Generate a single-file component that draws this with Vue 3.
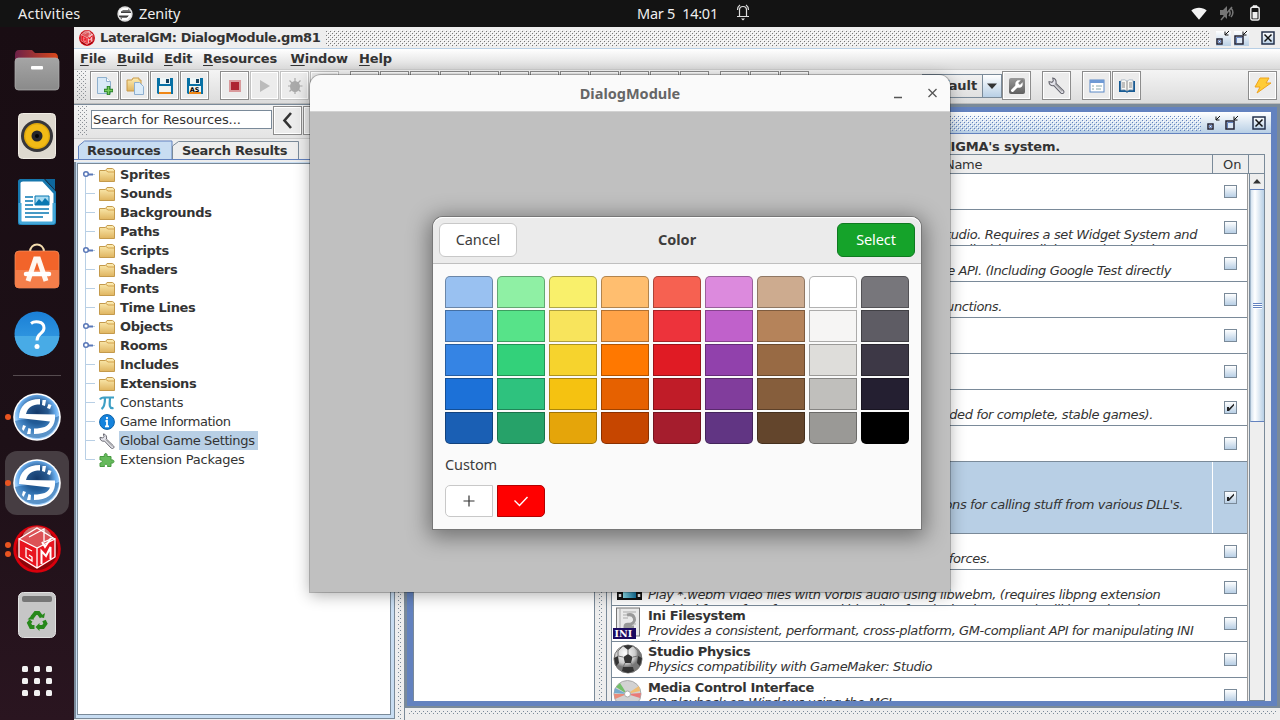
<script setup>
const tree = [
  { t: 'Sprites', k: 'folder', h: 1 }, { t: 'Sounds', k: 'folder' }, { t: 'Backgrounds', k: 'folder' },
  { t: 'Paths', k: 'folder' }, { t: 'Scripts', k: 'folder', h: 1 }, { t: 'Shaders', k: 'folder' },
  { t: 'Fonts', k: 'folder' }, { t: 'Time Lines', k: 'folder' }, { t: 'Objects', k: 'folder', h: 1 },
  { t: 'Rooms', k: 'folder', h: 1 }, { t: 'Includes', k: 'folder' }, { t: 'Extensions', k: 'folder' },
  { t: 'Constants', k: 'pi' }, { t: 'Game Information', k: 'info' },
  { t: 'Global Game Settings', k: 'wrench', sel: 1 }, { t: 'Extension Packages', k: 'puzzle' }
]
const menus = ['File', 'Build', 'Edit', 'Resources', 'Window', 'Help']
const rows = [
  {}, { tail: 'Studio. Requires a set Widget System and', end: 1197, more: 'enabled for all widgets, dialogs and native input    ' },
  { tail: 'the API. (Including Google Test directly', end: 1171 },
  { tail: 'functions.', end: 1002 }, {}, {},
  { tail: 'needed for complete, stable games).', end: 1153, on: 1 }, {},
  { tail: "functions for calling stuff from various DLL's.", end: 1183, on: 1, sel: 1 },
  { tail: 'forces.', end: 990 },
  { name: 'Video', d: 'Play *.webm video files with vorbis audio using libwebm, (requires libpng extension', m: 'enabled for surface format, and blending for playback textures) will be replaced', k: 'film' },
  { name: 'Ini Filesystem', d: 'Provides a consistent, performant, cross-platform, GM-compliant API for manipulating INI', m: 'files.', k: 'ini' },
  { name: 'Studio Physics', d: 'Physics compatibility with GameMaker: Studio', k: 'ball' },
  { name: 'Media Control Interface', d: 'CD playback on Windows using the MCI.', k: 'cd' }
]
const palette = [
  '#99c1f1', '#8ff0a4', '#f9f06b', '#ffbe6f', '#f66151', '#dc8add', '#cdab8f', '#ffffff', '#77767b',
  '#62a0ea', '#57e389', '#f8e45c', '#ffa348', '#ed333b', '#c061cb', '#b5835a', '#f6f5f4', '#5e5c64',
  '#3584e4', '#33d17a', '#f6d32d', '#ff7800', '#e01b24', '#9141ac', '#986a44', '#deddda', '#3d3846',
  '#1c71d8', '#2ec27e', '#f5c211', '#e66100', '#c01c28', '#813d9c', '#865e3c', '#c0bfbc', '#241f31',
  '#1a5fb4', '#26a269', '#e5a50a', '#c64600', '#a51d2d', '#613583', '#63452c', '#9a9996', '#000000'
]
</script>

<template>
  <div class="screen">
    <svg class="defs" width="0" height="0">
      <defs>
        <linearGradient id="gFold" x2="0" y2="1"><stop stop-color="#fdeeb4" /><stop offset="1" stop-color="#dfb45f" /></linearGradient>
        <linearGradient id="gGrey" x2="0" y2="1"><stop stop-color="#a5a5a5" /><stop offset="1" stop-color="#8a8a8a" /></linearGradient>
        <linearGradient id="gBack" x2="1" y2="0"><stop stop-color="#6d2148" /><stop offset="1" stop-color="#d9481b" /></linearGradient>
        <linearGradient id="gHelp" x2="0" y2="1"><stop stop-color="#1a7fd6" /><stop offset="1" stop-color="#3da4e6" /></linearGradient>
        <radialGradient id="gS" cy=".4"><stop stop-color="#143a6b" /><stop offset=".5" stop-color="#28598f" /><stop offset=".85" stop-color="#6eb2f2" /><stop offset="1" stop-color="#a5d2fb" /></radialGradient>
        <linearGradient id="gBlue" x2="0" y2="1"><stop stop-color="#fff" /><stop offset="1" stop-color="#b8cfe5" /></linearGradient>
        <linearGradient id="gFilm" x2="1" y2="0"><stop stop-color="#8ee2ef" /><stop offset="1" stop-color="#1374a0" /></linearGradient>
        <linearGradient id="gTool" x2="0" y2="1"><stop stop-color="#999" /><stop offset="1" stop-color="#606060" /></linearGradient>
        <radialGradient id="gBall" cx=".4" cy=".3"><stop stop-color="#fff" /><stop offset=".7" stop-color="#ccc" /><stop offset="1" stop-color="#777" /></radialGradient>
        <symbol id="wrench" viewBox="0 0 16 16"><path d="M4.400.9 5 3.700 3.700 5 1 4.300C.7 7 3 8.800 5.500 8.100l6.700 7c.8.7 1.700.5 2.300 0 .6-.6.7-1.500 0-2.200l-7-6.800C8.100 3.300 6.600 1 4.400.9z" fill="#e3e3ea" stroke="#66666f" /><path d="m6.500 6.500 6.900 7.100" stroke="#aaa" /></symbol>
        <symbol id="doc" viewBox="0 0 18 18"><path d="M1.500.5h9l4 4v12h-13z" fill="#d9eaf7" stroke="#8fb0cd" /><path d="M10.500.5v4h4" fill="#fff" stroke="#8fb0cd" /></symbol>
        <symbol id="floppy" viewBox="0 0 16 16"><path d="M0 0h16v16H1l-1-1z" fill="#0871a5" /><path d="M3 0h10v6H3z" fill="#eef5f6" /><path d="M9 1h3v4H9z" fill="#123f5c" /><path d="M2 8h12v6H2z" fill="#f4f4ef" /><path d="M2 14h12v2H2z" fill="#ef8615" /></symbol>
        <symbol id="slogo" viewBox="0 0 48 48"><circle cx="24" cy="24" r="23.800" fill="#fff" /><circle cx="24" cy="24" r="22.300" fill="url(#gS)" /><path d="M2 28c10-4 24 3 44-5-1 13-10 22-22 22C13 45 4 38 2 28z" fill="#1e5f9f" opacity=".55" /><path d="M27 6v5.500c-8 0-12 2.500-14 9.500L42 21.500V26c-1 9-8 15-21 15v-5.500c9 0 14-2 16-7L6 25C6 13 14 6 27 6z" fill="#fff" /><path d="m29 12 .5-5h3.500l-1 6zm5 3 1.500-4 3 1-1.500 4zM18 36l-.5 5H14l1.500-6zM13 33l-2.500 5-1.500-2 1-4z" fill="#fff" /></symbol>
        <symbol id="lgm" viewBox="0 0 48 48"><circle cx="24" cy="24" r="23.800" fill="#d9000c" /><circle cx="24" cy="24" r="21" fill="#8b0509" /><ellipse cx="24" cy="14" rx="15" ry="12.500" fill="#d68785" opacity=".8" /><path d="m6 14 18-11 18 11v19L24 44 6 33z" fill="#e81520" /><path d="m6 14 18-11 18 11-18 9z" fill="#dc5257" /><path d="m6 14 18 9 18-9v18L24 43 6 32zM24 23v20M6 14 24 3l18 11M16 12 31 4v13l9-4M19 26l-6-3v9l6 4v-4l-3-2" fill="none" stroke="#fff" stroke-width="1.300" /><path d="M28.500 39V26l4.500 5 4.500-9v12M29 17l3 5 6-9" fill="none" stroke="#fff" stroke-width="2" /></symbol>
      </defs>
    </svg>

    <header class="topbar">
      <span class="act">Activities</span>
      <svg class="zicon" width="16" height="16" viewBox="0 0 16 16"><circle cx="8" cy="8" r="7.700" fill="#ddd" /><circle cx="8" cy="8" r="6" fill="#777" /><path d="M11 3H6L3 5v3h10v2l-3 3H5M2 8.500h12" stroke="#fff" stroke-width="2" fill="none" /><path d="M4 6.300h10M2 10.300h9" stroke="#333" /></svg>
      <span class="zen">Zenity</span>
      <span class="clock">Mar 5&nbsp; 14:01</span>
      <svg class="bell" width="14" height="17" viewBox="0 0 14 17"><path d="M3.500 12V6c0-2 1.300-3.500 3.500-3.500S10.500 4 10.500 6v6M1 12.500h12M1.500 6c0-2 1-4 2.500-5M12.500 6c0-2-1-4-2.500-5" fill="none" stroke="#ddd" stroke-width="1.200" /><path d="M5 14.500h4l-2 2z" fill="#eee" /></svg>
      <svg class="wifi" width="16" height="13" viewBox="0 0 16 13"><path d="M.3 3.500C4.500-.3 11.500-.3 15.700 3.500L8 12.700z" fill="#f2f2f2" /></svg>
      <svg class="mute" width="16" height="16" viewBox="0 0 16 16"><path d="M1 5h3l4-4v13l-4-4H1z" fill="#777" /><path d="M10 5c1.500 2 1.500 4 0 6M12 3c2.500 3 2.500 6 0 9M2 15 13 2" stroke="#777" stroke-width="1.500" fill="none" /></svg>
      <svg class="batt" width="10" height="16" viewBox="0 0 10 16"><path d="M3 2V.8h4V2" fill="#eee" stroke="#eee" /><rect x=".8" y="2.300" width="8.400" height="12.700" rx="1.500" fill="none" stroke="#eee" stroke-width="1.400" /><path d="M2.500 7h5v6.500h-5z" fill="#eee" /></svg>
    </header>

    <nav class="dock">
      <div class="item"><svg width="46" height="42" viewBox="0 0 46 42"><path d="M1 6q0-5 4-5h13l3 3h19q4 0 4 5v15H1z" fill="url(#gBack)" /><rect x="1" y="9" width="44" height="32" rx="3.500" fill="url(#gGrey)" stroke="#b3b3b3" stroke-width=".7" /><rect x="17" y="17" width="12" height="3.500" rx="1" fill="#fff" /></svg></div>
      <div class="item"><svg width="38" height="46" viewBox="0 0 38 46"><rect x=".5" y=".5" width="37" height="45" rx="4" fill="#ded9cf" stroke="#f1ede5" /><circle cx="19" cy="23" r="16" fill="#37373b" /><circle cx="19" cy="23" r="13" fill="#e0a90c" /><circle cx="19" cy="23" r="11.500" fill="#f1ba16" /><circle cx="19" cy="23" r="5.500" fill="#26272c" /><circle cx="19" cy="23" r="2" fill="#050505" /></svg></div>
      <div class="item"><svg width="38" height="46" viewBox="0 0 38 46"><path d="M5 1h20l12 13v28q0 3-4 3H4q-3 0-3-3V4q0-3 4-3z" fill="#fff" stroke="#1677ad" stroke-width="3" /><path d="M2 24v18q0 2 3 2h28q3 0 3-2V24" fill="none" stroke="#44a7d8" stroke-width="3" /><path d="M27 0h10v11z" fill="#0e679c" /><path d="M7 18h8M7 22h8M7 26h8M7 30h24M7 34h24M7 38h18" stroke="#0978b2" stroke-width="1.700" /><path d="M17 17h14v9H17z" fill="#a9dbf1" stroke="#0978b2" /><path d="m17 25 4-5 3 3 3-4 4 4v3H17z" fill="#0978b2" /></svg></div>
      <div class="item"><svg class="bag" width="46" height="46" viewBox="0 0 46 46"><path d="M16 9c0-10 14-10 14 0" fill="none" stroke="#f3dcae" stroke-width="2" /><rect x="1" y="8" width="44" height="37" rx="4" fill="#f2642a" stroke="#f59463" stroke-width=".7" /><path d="M1 27h44v14q0 4-4 4H5q-4 0-4-4z" fill="#f47e4a" /><path d="M14 38 21.500 16h3L32 38" fill="none" stroke="#fff7f0" stroke-width="5" /><path d="M12 31h23" stroke="#fff" stroke-width="4.500" stroke-linecap="round" /></svg></div>
      <div class="item"><svg width="46" height="46" viewBox="0 0 46 46"><circle cx="23" cy="23" r="22.500" fill="url(#gHelp)" /><path d="M.6 25h44.800C44 37 35 45.500 23 45.500S2 37 .6 25z" fill="#48abe6" /><path d="M17 12.500c3-2.300 13-3 13 4.500 0 6-7 5-7 12.500" fill="none" stroke="#fff" stroke-width="3" /><circle cx="23" cy="35.500" r="2.500" fill="#fff" /></svg></div>
      <div class="sep"></div>
      <div class="item"><i class="dot"></i><svg width="48" height="48"><use href="#slogo" /></svg></div>
      <div class="item"><b class="active"></b><i class="dot"></i><svg class="front" width="48" height="48"><use href="#slogo" /></svg></div>
      <div class="item"><i class="dot first"></i><i class="dot second"></i><svg width="48" height="48"><use href="#lgm" /></svg></div>
      <div class="item"><svg width="38" height="46" viewBox="0 0 38 46"><rect x=".5" y=".5" width="37" height="45" rx="5" fill="#c6c6c6" stroke="#e1e1e1" /><rect x="4" y="4" width="30" height="6" rx="2" fill="#777" /><g fill="none" stroke="#27881b" stroke-width="3.800"><path d="m14 25.500 3.500-4.500h3l3 4M26 28.500l1.500 3-2.500 3.500h-4.500M16.500 35H13l-2-4 2-2.500" /></g><path d="m21 25 5 1 1-5zM21.500 31v8l-4-4zM9.500 27.500h6.500l-2-4.500z" fill="#27881b" /></svg></div>
      <div class="item"><div class="apps"><i v-for="n in 9" :key="n"></i></div></div>
    </nav>

    <main class="app">
      <div class="title">
        <svg width="16" height="16"><use href="#lgm" /></svg><span class="cap">LateralGM: DialogModule.gm81</span><span class="bumps grey"></span>
        <div class="wb"><svg width="16" height="16" viewBox="0 0 16 16"><path d="M1 1h15v15H1z" fill="url(#gBlue)" /><path d="m14 1-4 4M10 1.500V5h3.500" stroke="#111" fill="none" /><path d="M2 9h5v5H2z" fill="#fff" stroke="#223" stroke-width="1.500" /><path d="M3.500 10.500h2v2h-2z" fill="none" stroke="#6382bf" /></svg><svg width="16" height="16" viewBox="0 0 16 16"><path d="M1 1h15v15H1z" fill="url(#gBlue)" /><path d="m14 1-4 4M10 1.500V5h3.500" stroke="#111" fill="none" /><path d="M2 6h8v8H2z" fill="#dce8f4" stroke="#223" stroke-width="1.500" /><path d="M3.500 13V7.500H9" fill="none" stroke="#6382bf" /></svg><svg class="x" width="15" height="15" viewBox="0 0 15 15"><path d="M1 1h12v12H1z" fill="url(#gBlue)" stroke="#25324c" stroke-width="1.500" /><path d="m3.500 3.500 7 7m0-7-7 7" stroke="#111" stroke-width="1.500" /></svg></div>
      </div>
      <div class="menu"><span v-for="m in menus" :key="m" :class="'m-' + m"><u>{{ m[0] }}</u>{{ m.slice(1) }}</span></div>
      <div class="tools">
        <span class="grip"></span>
        <b class="btn"><svg width="18" height="18"><use href="#doc" /><path d="M12.500 9v9M8 13.500h9" stroke="#278127" stroke-width="3.500" /><path d="M12.500 9.700v7.600M8.700 13.500h7.600" stroke="#78cc5c" stroke-width="1.500" /></svg></b>
        <b class="btn"><svg width="18" height="18"><path d="M1 3h5l1-2h6v2h2v11H1z" fill="url(#gFold)" stroke="#c89849" /><path d="M8.500 5.500h5l4 4v8h-9z" fill="#dcecf9" stroke="#8eafd0" /></svg></b>
        <b class="btn"><svg width="16" height="16"><use href="#floppy" /></svg></b>
        <b class="btn"><svg width="16" height="16"><use href="#floppy" /><text x="2.700" y="13.500" font-size="6.500" font-weight="700">AS</text></svg></b>
        <b class="btn g"><svg width="16" height="16"><path d="M2 2h12v12H2z" fill="#d99a9c" /><path d="M4 4h8v8H4z" fill="#ae2531" /></svg></b>
        <b class="btn dis"><svg width="16" height="16"><path d="M3 2v12l10-6z" fill="#bbb" /></svg></b>
        <b class="btn dis"><svg width="16" height="16"><ellipse cx="8" cy="8.500" rx="5" ry="5.500" fill="#aaa" /><path d="M8 0v16M1 8h14.500M2.500 2.500l11 11m0-11-11 11" stroke="#aaa" stroke-width="1.200" /></svg></b>
        <b class="btn dis"></b>
        <b v-for="n in 12" :key="'a' + n" class="btn" :class="{ g: n === 1 }"></b>
        <b v-for="n in 3" :key="'b' + n" class="btn" :class="{ g: n === 1 }"></b>
        <div class="combo"><span>Default</span><i><svg width="12" height="7"><path d="M1 .5h10L6 6z" fill="#333" /></svg></i></div>
        <b class="btn nog"><svg width="16" height="16"><rect width="16" height="16" rx="2" fill="url(#gTool)" /><path d="M3.500 12.500 9 7" stroke="#fff" stroke-width="3" stroke-linecap="round" /><circle cx="10" cy="6" r="3.700" fill="#fff" /><path d="m10 6 4-4" stroke="#808080" stroke-width="2.500" /></svg></b>
        <b class="btn g2"><svg width="17" height="17"><use href="#wrench" /></svg></b>
        <b class="btn g"><svg width="16" height="16"><rect x="1" y="2" width="14" height="12" fill="#fff" stroke="#5a88c5" /><path d="M1 2h14v3H1z" fill="#6e9ad5" /><path d="M3 8h2m2 0h6M3 11h2m2 0h5" stroke="#8aa" /></svg></b>
        <b class="btn"><svg width="16" height="16"><path d="M0 3h16v11H9l-1 1-1-1H0z" fill="#175b94" /><path d="M2 2q4-1 6 1 2-2 6-1v10q-4-1-6 1-2-2-6-1z" fill="#f8f8f4" stroke="#9ab" stroke-width=".7" /><path d="M8 3v10M3 5h3m-3 2h3M3 9h3m4-4h3m-3 2h3m-3 2h3" stroke="#888" /></svg></b>
        <b class="btn last"><svg width="18" height="18"><path d="M6 1h9l-3 5h5L3 16l3-6H1z" fill="#ffcc37" stroke="#efa31e" /></svg></b>
      </div>

      <div class="work">
        <section class="left">
          <div class="search"><span class="grip"></span><span class="field">Search for Resources...</span><b class="btn"><svg width="16" height="18"><path d="m11 1-6.500 7.500L11 16" fill="none" stroke="#333" stroke-width="2.600" /></svg></b><b class="btn"></b></div>
          <div class="tabs">
            <svg class="tabbg" width="321" height="22"><path d="M4.500 19.500V6l6-5H98v18.500z" fill="#c8ddf2" stroke="#6382bf" /><path d="M98.500 19V6l6-4.500H224.500V19" fill="#eee" stroke="#7a8a99" /><path d="M0 19.500h4.500M98 19.500h240" stroke="#6382bf" /></svg>
            <span class="t1">Resources</span><span class="t2">Search Results</span>
          </div>
          <div class="pane"><ul class="tree">
            <li v-for="(r, i) in tree" :key="r.t">
              <svg class="branch" width="20" height="19"><path :d="i === 15 ? 'M7.500 0v9.500H17' : i === 0 ? 'M7.500 9v10M8 9.500h9' : 'M7.500 0v19M8 9.500h9'" fill="none" stroke="#b8cfe5" /><g v-if="r.h"><path d="M10 9.500h5" stroke="#5a78b8" stroke-width="2" /><circle cx="8" cy="9" r="2.300" fill="#fff" stroke="#5a78b8" stroke-width="1.500" /></g></svg>
              <svg class="ticon" width="16" height="16" viewBox="0 0 16 16">
                <g v-if="r.k === 'folder'"><path d="M.5 3.500h6l1.500-2h5.500l2 1.500v11.500H.5z" fill="url(#gFold)" stroke="#c49a4c" /><path d="M7 3.500 9 5h6" fill="none" stroke="#d4a24c" /></g>
                <g v-else-if="r.k === 'pi'" fill="none" stroke="#3d9fc5" stroke-width="2.200"><path d="M1 4.500C2 2.500 3 2.500 5 2.500h10M6 3c0 6-.5 9-3.500 11M11 3c-.5 7-1 11 3.500 10" /></g>
                <g v-else-if="r.k === 'info'"><circle cx="8" cy="8" r="7.400" fill="#1583dd" stroke="#0b62a9" /><path d="M8 3v2.200M6.500 7H8v5M6 12.300h4" stroke="#fff" stroke-width="1.800" fill="none" /></g>
                <use v-else-if="r.k === 'wrench'" href="#wrench" />
                <path v-else d="M1 4.500h4.500C4 1 9 0 8 4.500h4v3.500c4-1 4 4 0 3v3.500H8.500c1-3-4-3-3 0H1V11c3 0 3-3.500 0-3z" fill="#66ba5c" stroke="#489b41" />
              </svg>
              <span :class="['n-' + r.k, { sel: r.sel }]">{{ r.t }}</span>
            </li>
          </ul></div>
        </section>
        <div class="split"><i></i></div>
        <section class="desk">
          <div class="frame">
            <div class="ftitle"><span class="bumps blue"></span>
              <div class="wb"><svg width="16" height="16" viewBox="0 0 16 16"><path d="m14 1-4 4M10 1.500V5h3.500" stroke="#111" fill="none" /><path d="M2 9h5v5H2z" fill="#fff" stroke="#223" stroke-width="1.500" /><path d="M3.500 10.500h2v2h-2z" fill="none" stroke="#6382bf" /></svg><svg width="16" height="16" viewBox="0 0 16 16"><path d="m14 1-4 4M10 1.500V5h3.500" stroke="#111" fill="none" /><path d="M2 6h8v8H2z" fill="#dce8f4" stroke="#223" stroke-width="1.500" /><path d="M3.500 13V7.500H9" fill="none" stroke="#6382bf" /></svg><svg class="x" width="15" height="15" viewBox="0 0 15 15"><path d="M1 1h12v12H1z" fill="url(#gBlue)" stroke="#25324c" stroke-width="1.500" /><path d="m3.500 3.500 7 7m0-7-7 7" stroke="#111" stroke-width="1.500" /></svg></div>
            </div>
            <div class="fbody">
              <div class="list"></div><div class="split s2"><i></i></div>
              <div class="right">
                <div class="msg"><span>in ENIGMA's system.</span></div>
                <div class="tbl">
                  <div class="th"><span class="hn">Name</span><span class="ho">On</span></div>
                  <div class="tb">
                    <div class="rows">
                      <div v-for="(r, i) in rows" :key="i" class="row" :class="{ sel: r.sel }">
                        <div class="cell">
                          <template v-if="r.name">
                            <svg class="big" width="32" height="32" viewBox="0 0 32 32">
                              <g v-if="r.k === 'film'"><path d="M4 8h25v21H4z" fill="#111" /><path d="M10 8h13v19H10z" fill="url(#gFilm)" /><path d="M7 8v20M26 8v20" stroke="#eee" stroke-width="2.500" stroke-dasharray="3 2" /></g>
                              <g v-else-if="r.k === 'ini'"><rect x="3.500" y="1" width="23" height="28" fill="#eaeaea" stroke="#777" /><path d="M7 1v25M10 5h13M10 8h6M10 11h5M19 17h4" stroke="#aaa" /><path d="M14 8c8-2 10 7 4 9-4 1-6-1-6 3h9" stroke="#999" stroke-width="3" fill="none" /><path d="M0 21h23v11H0z" fill="#1b0a60" /><text x="1.500" y="30" font-family="DejaVu Serif, serif" font-size="9.500" font-weight="700" fill="#fff">INI</text></g>
                              <g v-else-if="r.k === 'ball'"><circle cx="15" cy="16" r="14" fill="url(#gBall)" stroke="#777" /><path d="m15 11 4.500 3-1.500 6h-6l-1.500-6zM15 2l5 1-5 4-5-4zM1 15l4-2 1 7-3 3zM29 15l-4-2-1 7 3 3zM9 28l1-4h10l1 4-6 2z" fill="#343434" /><path d="M15 7v4M20 14l5-1M18 20l2 4M12 20l-2 4M10 14l-5-1M10 3 5 8v5M20 3l5 5v5" stroke="#777" fill="none" /></g>
                              <g v-else><circle cx="14.500" cy="15" r="13.500" fill="#d2d2d2" stroke="#aaa" /><path d="m14 15-11-7 4-4z" fill="#73bf69" /><path d="m14 15-13-1 1-5z" fill="#7ac" /><path d="m14 15 12-8 1 5z" fill="#f0bd72" /><path d="m14 15 14-1-1 5z" fill="#e97978" /><path d="m14 15-13 0 1 5z" fill="#e98b78" /><circle cx="14.500" cy="15" r="3" fill="#fff" stroke="#aaa" /></g>
                            </svg>
                            <div class="txt"><strong>{{ r.name }}</strong><em>{{ r.d }}</em><em v-if="r.m">{{ r.m }}</em></div>
                          </template>
                          <div v-else-if="r.tail" class="tail" :style="{ width: r.end - 612 + 'px' }"><em>{{ r.tail }}</em><em v-if="r.more">{{ r.more }}</em></div>
                        </div>
                        <div class="on"><i class="cb"><svg v-if="r.on" width="11" height="11"><path d="M2 5h2v1.500L9 1.500v2L4 9H2z" fill="#222" /></svg></i></div>
                      </div>
                    </div>
                    <div class="scroll"><i class="up"><svg width="8" height="5"><path d="M4 0 8 4.500H0z" fill="#333" /></svg></i><i class="thumb"><s></s></i></div>
                  </div>
                </div>
              </div>
            </div>
          </div>
          <div class="hgrip"></div>
        </section>
      </div>
    </main>

    <section class="dlg">
      <div class="dh"><span>DialogModule</span><svg width="50" height="12" viewBox="0 0 50 12"><path d="M0 10.500h8M34.500 2l8 8m0-8-8 8" stroke="#555" stroke-width="1.300" fill="none" /></svg></div>
    </section>

    <section class="color">
      <div class="ch"><button class="cancel">Cancel</button><span>Color</span><button class="select">Select</button></div>
      <div class="cbody">
        <div class="grid"><i v-for="(c, i) in palette" :key="i" :class="{ top: i < 9, bot: i > 35 }" :style="{ background: c }"></i></div>
        <p>Custom</p>
        <div class="cust"><i class="plus"><svg width="12" height="12"><path d="M6 .5v11M.5 6h11" stroke="#333" stroke-width="1.200" /></svg></i><i class="chk"><svg width="16" height="12"><path d="m1.500 5.500 5 5 8-8.500" fill="none" stroke="#fff" stroke-width="1.400" /></svg></i></div>
      </div>
    </section>
  </div>
</template>

<style>
html, body { margin: 0; overflow: hidden; }
</style>
<style scoped>
* { box-sizing: border-box; }
.screen { position: relative; width: 1280px; height: 720px; overflow: hidden; background: #eee; font-family: "DejaVu Sans", sans-serif; font-size: 13px; color: #333; white-space: nowrap; }
.defs { position: absolute; }
svg { display: block; flex: none; }
i { font-style: normal; display: block; }
.topbar { height: 27px; background: #131313; color: #eee; display: flex; align-items: center; font: 14.500px "Noto Sans", sans-serif; position: relative; }
.act { margin-left: 18px; width: 99px; letter-spacing: .2px; margin-top: -1px; }
.zen { margin-left: 6px; margin-top: -1px; letter-spacing: -.1px; }
.clock { position: absolute; left: 637px; top: 3px; letter-spacing: -.25px; }
.bell { position: absolute; left: 736px; top: 4px; }
.wifi { position: absolute; left: 1191px; top: 7px; }
.mute { position: absolute; left: 1219px; top: 5px; }
.batt { position: absolute; left: 1250px; top: 5px; }
.dock { position: absolute; left: 0; top: 27px; width: 74px; height: 693px; padding-top: 10px; background: linear-gradient(#190d13, #1d1017 60%, #2a1520); }
.item { height: 66px; display: flex; align-items: center; justify-content: center; position: relative; }
.bag { margin-top: -5px; }
.sep { height: 17px; width: 48px; margin: 0 13px; background: linear-gradient(#554b4f, #554b4f) 0 8px / 100% 1px no-repeat; }
.dot { position: absolute; left: 5px; top: 30px; width: 6px; height: 6px; border-radius: 3px; background: #e95420; }
.dot.first { top: 26px; } .dot.second { top: 35px; }
.active { position: absolute; left: 5px; top: 1px; width: 64px; height: 64px; border-radius: 12px; background: #463d42; }
.front { position: relative; }
.apps { display: grid; grid-template-columns: repeat(3, 6px); gap: 6px; }
.apps i { height: 6px; border-radius: 1.500px; background: #f2f2f2; }

.app { position: absolute; left: 74px; top: 27px; width: 1206px; height: 693px; display: flex; flex-direction: column; background: #eee; }
.title { height: 22px; border-bottom: 1px solid #b8cfe5; display: flex; align-items: center; padding-left: 5px; font-weight: 700; }
.cap { margin-left: 5px; width: 226px; letter-spacing: -.39px; }
.bumps { flex: 1; height: 16px; }
.bumps.grey { margin-right: 5px; background: conic-gradient(at 1px 1px, transparent 270deg, #777 0) 0 1px / 4px 4px, conic-gradient(at 1px 1px, transparent 270deg, #777 0) 2px 3px / 4px 4px, conic-gradient(at 1px 1px, transparent 270deg, #fff 0) 1px 2px / 4px 4px, conic-gradient(at 1px 1px, transparent 270deg, #fff 0) 3px 0 / 4px 4px; }
.bumps.blue { margin: 0 5px 0 5px; background: conic-gradient(at 1px 1px, transparent 270deg, #6382bf 0) 0 1px / 4px 4px, conic-gradient(at 1px 1px, transparent 270deg, #6382bf 0) 2px 3px / 4px 4px, conic-gradient(at 1px 1px, transparent 270deg, #fff 0) 1px 2px / 4px 4px, conic-gradient(at 1px 1px, transparent 270deg, #fff 0) 3px 0 / 4px 4px; }
.wb { display: flex; width: 65px; gap: 2px; }
.wb .x { margin-left: 10px; margin-top: 1px; }
.menu { height: 21px; border-bottom: 1px solid #ccc; background: linear-gradient(#fff, #dadada); display: flex; align-items: center; padding-left: 6px; font-weight: 700; padding-bottom: 1px; letter-spacing: -.15px; }
.m-File { width: 37px; } .m-Build { width: 47px; } .m-Edit { width: 39px; } .m-Resources { width: 87.500px; } .m-Window { width: 68.500px; }
.menu u { text-underline-offset: 2px; text-decoration-thickness: 1px; }
.tools { height: 34px; display: flex; padding: 1px 0 0 3px; background: linear-gradient(#f4f4f4, #dcdcdc); border-bottom: 1px solid #bbb; }
.grip { width: 10px; background: conic-gradient(at 1px 1px, transparent 270deg, #8a8f95 0) 0 0 / 4px 4px, conic-gradient(at 1px 1px, transparent 270deg, #8a8f95 0) 2px 2px / 4px 4px; height: 30px; margin-right: 3px; }
.btn { width: 29px; height: 29px; margin-right: 1px; border: 1px solid #8c8c8c; box-shadow: inset -1px -1px #fff, inset 1px 1px #fff; background: #ececec; display: flex; align-items: center; justify-content: center; flex: none; }
.btn.g { margin-left: 10px; } .btn.g2 { margin-left: 10px; } .btn.dis { border-color: #c2c2c2; }
.btn.last { margin-left: 106px; }
.combo { margin: 3px 0 0 112px; height: 24px; width: 80px; border: 1px solid #7a8a99; display: flex; font-weight: 700; justify-content: flex-end; line-height: 21px; letter-spacing: -.1px; }
.combo i { width: 19px; margin-left: 5px; border-left: 1px solid #7a8a99; background: linear-gradient(#fff, #b8cfe5); display: flex; align-items: center; justify-content: center; }

.work { flex: 1; min-height: 0; display: flex; }
.left { width: 321px; border-top: 1px solid #7a8a99; display: flex; flex-direction: column; margin-bottom: 1px; background: #eee; overflow: hidden; }
.search { height: 34px; display: flex; padding: 1px 0 0 4px; background: linear-gradient(#f4f4f4, #e4e4e4); border-bottom: 1px solid #ccc; }
.field { width: 181px; height: 19px; margin: 4px 1px 0 0; background: #fff; border: 1px solid #7a8a99; line-height: 18px; padding-left: 1px; letter-spacing: -.08px; }
.tabs { height: 22px; position: relative; margin-top: 1px; font-weight: 700; line-height: 22px; display: flex; }
.tabbg { position: absolute; left: 0; top: 0; width: 321px; }
.t1 { position: relative; margin-left: 13px; width: 95px; letter-spacing: -.2px; } .t2 { position: relative; letter-spacing: -.28px; }
.pane { flex: 1; min-height: 0; border: 1px solid #7a8a99; border-top: 0; border-left-width: 2px; border-right-width: 1px; background: #c8ddf2; padding: 1px 3px 3px 1px; }
.tree { margin: 0; padding: 1px 0 0; list-style: none; height: 100%; border: 1px solid #7a8a99; background: #fff; }
.tree li { height: 19px; display: flex; align-items: center; }
.ticon { margin: 0 4px 0 1px; }
.tree span { line-height: 19px; padding: 0 3px 0 1px; }
.tree .n-folder { font-weight: 700; letter-spacing: -.33px; }
.n-pi { letter-spacing: -.22px; } .n-info { letter-spacing: -.48px; } .n-wrench { letter-spacing: -.36px; } .n-puzzle { letter-spacing: -.22px; }
.tree .sel { background: #b8cfe5; }
.split { width: 9px; display: flex; justify-content: center; background: #eee; }
.split i { width: 4px; background: conic-gradient(at 1px 1px, transparent 270deg, #7a8a99 0) 0 0 / 4px 4px, conic-gradient(at 1px 1px, transparent 270deg, #7a8a99 0) 2px 2px / 4px 4px; }
.desk { flex: 1; min-width: 0; background: #7a8a99; padding: 3px 3px 0; display: flex; flex-direction: column; }
.frame { height: 599px; border: 5px solid #6382bf; border-left-width: 6px; border-right-width: 6px; display: flex; flex-direction: column; background: #eee; box-shadow: 0 1px #7a8a99; flex: none; }
.ftitle { height: 22px; border-bottom: 1px solid #6382bf; background: linear-gradient(#fff, #b8cfe5); display: flex; align-items: center; flex: none; }
.ftitle .wb { width: 65px; }
.fbody { flex: 1; min-height: 0; display: flex; padding-left: 1px; background: linear-gradient(#7a8a99, #7a8a99) 0 0 / 1px 100% no-repeat; }
.list { width: 181px; background: #fff; border-right: 1px solid #7a8a99; }
.s2 { width: 11px; }
.right { flex: 1; min-width: 0; border-left: 1px solid #7a8a99; padding: 0 6px 0 4px; display: flex; flex-direction: column; }
.msg { height: 20px; font-weight: 700; line-height: 25px; flex: none; }
.msg span { display: block; width: 449px; text-align: right; letter-spacing: -.2px; }
.tbl { flex: 1; min-height: 0; border-left: 1px solid #7a8a99; display: flex; flex-direction: column; }
.th { height: 20px; border-top: 1px solid #7a8a99; border-bottom: 1px solid #7a8a99; border-right: 1px solid #7a8a99; display: flex; line-height: 19px; flex: none; }
.hn { width: 601px; border-right: 1px solid #7a8a99; padding-left: 333px; letter-spacing: -.3px; }
.ho { width: 36px; border-right: 1px solid #7a8a99; padding-left: 10px; }
.tb { flex: 1; min-height: 0; display: flex; overflow: hidden; }
.rows { width: 636px; border-right: 1px solid #999; background: #fff; margin-right: 1px; overflow: hidden; }
.row { height: 36px; display: flex; border-bottom: 1px solid #7a8a99; overflow: hidden; }
.row.sel { height: 72px; background: #b8cfe5; }
.cell { width: 601px; display: flex; overflow: hidden; }
.sel .cell { border-right: 1px solid #fff; }
.big { margin: 1px 4px 0 1px; }
.txt { padding-top: 2px; margin-left: -1px; }
.txt strong, em { display: block; line-height: 15px; height: 15px; }
.txt strong { letter-spacing: -.33px; }
em { letter-spacing: -.39px; }
.tail { padding-top: 17px; text-align: right; flex: none; white-space: pre; }
.sel .tail { padding-top: 35px; }
.on { flex: 1; display: flex; align-items: center; padding-left: 11px; }
.cb { width: 13px; height: 13px; border: 1px solid #7a8a99; background: linear-gradient(#fff, #b8cfe5); }
.scroll { width: 16px; border: 1px solid #7a8a99; border-top: 0; }
.up { height: 16px; display: flex; align-items: center; justify-content: center; border-bottom: 1px solid #6382bf; }
.thumb { height: 232px; border-bottom: 1px solid #6382bf; border-left: 1px solid #a3b8cc; background: linear-gradient(90deg, #d5e3f0, #fff 30%, #b8cfe5); padding: 113px 2px 0; }
.thumb s { display: block; height: 6px; background: repeating-linear-gradient(#6382bf 0 1px, #fff 1px 2px); }
.hgrip { margin: 2px -3px 0 -2px; flex: 1; background: conic-gradient(at 1px 1px, transparent 270deg, #7a8a99 0) 3px 0 / 4px 4px content-box, conic-gradient(at 1px 1px, transparent 270deg, #7a8a99 0) 1px 2px / 4px 4px content-box, #eee; padding: 3px 3px 5px; }

.dlg { position: absolute; left: 310px; top: 75px; width: 640px; height: 517px; border-radius: 11px 11px 0 0; background: #c0c0c0; box-shadow: 0 0 0 1px rgba(0,0,0,.23), 0 3px 16px rgba(0,0,0,.32); }
.dh { height: 37px; background: #fafafa; border-bottom: 1px solid #d2d2d2; border-radius: 11px 11px 0 0; display: flex; align-items: center; justify-content: center; font: 700 14.500px "Noto Sans", sans-serif; color: #666; position: relative; }
.dh svg { position: absolute; left: 584px; top: 12px; }
.color { position: absolute; left: 433px; top: 217px; width: 488px; height: 312px; border-radius: 10px 10px 0 0; background: #fafafa; box-shadow: 0 0 0 1px #777, 0 4px 22px 4px rgba(0,0,0,.42); font: 14.500px "Noto Sans", sans-serif; color: #3d3d3d; }
.ch { height: 47px; background: #ebebeb; border-bottom: 1px solid #bfbfbf; border-radius: 10px 10px 0 0; box-shadow: inset 0 1px #fff; display: flex; align-items: center; justify-content: space-between; padding: 0 6px; font-weight: 700; }
.ch span { margin-top: -2px; }
button { width: 78px; height: 34px; border: 1px solid #c8c8c8; border-radius: 6px; background: #fff; font: 14.500px "Noto Sans", sans-serif; color: #3d3d3d; padding: 0 0 2px; letter-spacing: -.1px; }
.select { background: #15a32a; border-color: #0f7a20; color: #fff; }
.cbody { padding: 12px; }
.grid { display: grid; grid-template-columns: repeat(9, 48px); grid-auto-rows: 32px; gap: 2px 4px; }
.grid i { border: 1px solid rgba(0,0,0,.3); }
.top { border-radius: 5px 5px 0 0; } .bot { border-radius: 0 0 5px 5px; }
p { margin: 10px 0 11px; line-height: 20px; letter-spacing: -.1px; }
.cust { display: flex; gap: 4px; }
.cust i { width: 48px; height: 32px; display: flex; align-items: center; justify-content: center; border: 1px solid #c8c8c8; background: #fff; }
.cust .plus { border-radius: 5px 0 0 5px; } .cust .chk { border-radius: 0 5px 5px 0; background: #f00; border-color: #b30000; }
</style>
